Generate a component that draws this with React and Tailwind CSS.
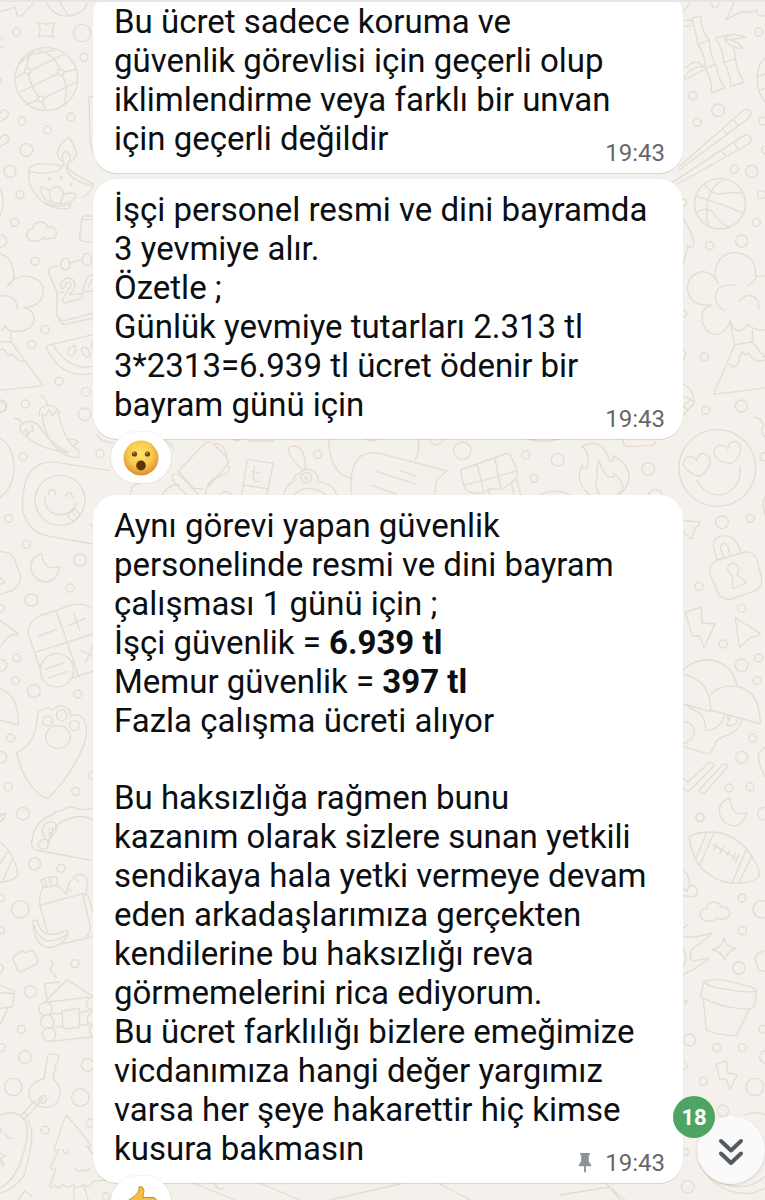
import React, { useState } from 'react';

const dots = {
  leftTop: [[50, 96, 12], [246, 99, 26], [252, 172, 12], [66, 363, 12], [213, 351, 12], [142, 390, 12], [79, 450, 19], [30, 514, 18], [60, 584, 12], [44, 667, 12], [2, 723, 18], [106, 784, 12], [135, 989, 12], [95, 1034, 12], [177, 1144, 12], [258, 1175, 13], [76, 1212, 12], [2, 1218, 18], [254, 1243, 19]],
  leftMid: [[69, 170, 12], [300, 161, 12], [26, 355, 12], [79, 433, 12], [240, 480, 19], [210, 564, 12], [94, 600, 19], [0, 625, 12], [50, 774, 12], [2, 796, 18], [46, 842, 12], [102, 873, 19], [233, 882, 12], [32, 1014, 12], [2, 1072, 18], [25, 1160, 12], [227, 1174, 12], [277, 1126, 12]],
  leftBottom: [[69, 41, 19], [104, 191, 18], [183, 205, 12], [61, 328, 26], [2, 294, 11], [2, 391, 11], [225, 491, 12], [91, 575, 18], [64, 688, 12], [4, 743, 12], [75, 771, 19], [263, 795, 19], [40, 861, 26], [241, 893, 26], [135, 990, 12], [270, 969, 12], [318, 1190, 11]],
  rightTop: [[281, 96, 12], [83, 287, 12], [159, 331, 19], [97, 367, 12], [294, 363, 12], [208, 507, 12], [260, 514, 18], [302, 450, 12], [290, 584, 12], [274, 667, 12], [230, 723, 18], [134, 737, 12], [54, 608, 11], [54, 941, 11], [118, 1071, 12], [229, 1218, 18], [122, 1231, 12]],
  rightMid: [[171, 367, 19], [256, 355, 12], [102, 559, 12], [230, 625, 12], [175, 732, 12], [281, 774, 12], [230, 796, 19], [276, 842, 12], [263, 1014, 12], [230, 1072, 18], [192, 1164, 12], [255, 1160, 12], [105, 1252, 12], [297, 170, 12]],
  rightBottom: [[105, 53, 12], [297, 41, 19], [231, 294, 12], [290, 328, 26], [232, 392, 12], [222, 504, 18], [74, 720, 18], [155, 743, 12], [232, 743, 12], [294, 688, 12], [54, 797, 12], [115, 844, 12], [270, 861, 26], [302, 771, 18], [174, 932, 17], [60, 1056, 11], [68, 1160, 19]],
};

const Dots = ({ list }) => list.map(([x, y, r]) => <circle key={`${x}-${y}`} cx={x} cy={y} r={r} />);

const Wallpaper = () => (
  <svg
    aria-hidden="true"
    className="absolute inset-0 h-full w-full"
    viewBox="0 2 765 1198"
    preserveAspectRatio="xMidYMin slice"
    fill="none"
    stroke="#e5dcd0"
    strokeWidth="4"
    strokeLinecap="round"
    strokeLinejoin="round"
  >
    {/* left column, top */}
    <g transform="scale(.33333)">
      <Dots list={dots.leftTop} />
      <path d="M0 35L45 22L52 48L66 47L98 10M140 10Q165 52 206 48Q250 43 262 10M175 0L206 48" />
      <path d="M113 66Q137 78 164 67Q152 89 162 112Q136 102 114 112Q127 90 113 66Z" />
      <path d="M0 112L8 118M0 138L10 142M0 235L6 243L0 249M0 341L8 331Q20 326 24 337Q28 347 19 353L0 366M0 415L9 405Q22 402 25 413Q28 423 19 429L0 440M0 565Q20 605 0 645" />
      <circle cx="139" cy="237" r="94" />
      <circle cx="83" cy="213" r="9" />
      <circle cx="182" cy="217" r="9" />
      <circle cx="122" cy="297" r="9" />
      <path d="M92 211L190 163M51 232L74 217M62 276L173 221M191 216L231 208M76 316L113 299M131 295L230 246M81 204Q80 170 105 149M85 222Q95 270 117 289M126 306L138 330M112 149Q160 160 180 208M186 226Q210 265 190 316M60 190L92 163L170 149" />
      <path d="M208 412Q175 432 172 459Q175 480 191 485M208 412Q222 437 230 457Q226 480 209 486M190 484Q180 463 198 454Q218 465 207 485M87 512Q84 495 125 491Q165 492 187 498Q194 494 191 485M207 485Q197 500 209 509Q232 528 280 552Q278 573 245 594M87 512Q82 550 103 577Q115 595 135 610Q165 630 206 625Q213 620 212 612M87 512Q115 527 160 515Q185 510 187 498M200 500Q202 540 280 558" />
      <path d="M122 560Q140 564 150 574Q155 563 175 560Q190 570 190 583Q207 578 228 581Q225 603 204 609Q170 614 147 604Q122 595 122 560ZM150 574Q147 590 156 605M190 583Q190 596 180 610M128 604Q160 625 212 613" />
      <circle cx="148" cy="537" r="3" /><circle cx="183" cy="533" r="3" /><circle cx="214" cy="553" r="3" />
      <path d="M100 723Q80 722 80 703Q84 684 99 689Q96 669 120 666Q143 667 143 683Q162 676 170 697Q169 717 148 715Q137 720 133 712Q123 725 100 723Z" />
      <path d="M278 648H253Q245 651 244 665L239 714Q241 723 252 724L278 727M246 658H278" />
      <path d="M0 762Q43 772 41 835Q38 845 22 858Q45 825 82 829Q130 836 130 875Q126 920 72 923Q105 930 102 962Q91 999 38 993Q20 993 18 977Q10 990 0 992M0 888Q50 880 52 928M33 993L34 1026L0 1025M34 1026L130 1157L0 1171M0 1052Q10 1040 18 1058Q28 1074 35 1060Q50 1084 73 1085" />
      <path d="M172 880L145 816Q145 806 155 802L176 797M210 789L244 778M172 882L169 946Q182 962 194 962L278 940M180 960Q183 974 196 973L278 954" />
      <ellipse cx="196" cy="792" rx="13" ry="18" /><ellipse cx="261" cy="778" rx="14" ry="18" />
      <path d="M172 880L190 876M183 861Q180 840 203 834Q232 838 222 867L209 884L247 880Q252 890 243 895L194 909Q184 905 190 894L213 857Q214 846 203 848Q196 850 195 861Q187 870 183 861M278 825L264 828L248 869Q250 880 265 875L278 873M278 838L265 860" />
      <path d="M278 1004L145 1036Q138 1038 139 1044Q175 1120 245 1124L278 1120M160 1035Q190 1090 245 1102L278 1099M205 1052Q212 1036 225 1038Q230 1052 219 1067Q201 1070 205 1052M245 1043Q262 1037 269 1057Q273 1071 261 1073Q243 1063 245 1043M278 1025Q271 1040 278 1045M278 290H267L270 420L278 460" />
    </g>

    {/* left column, middle */}
    <g transform="translate(0 400) scale(.33333)">
      <Dots list={dots.leftMid} />
      <path d="M0 5Q15 5 17 17Q17 34 0 36M118 -14Q140 -8 143 16M119 47Q112 20 145 17Q172 17 175 36Q177 60 190 90Q203 130 236 152V171Q205 180 160 135Q128 90 126 40L137 48L147 30L157 48L168 33L181 38M43 56Q60 53 66 71M66 99Q50 78 74 67Q100 58 118 80Q150 130 205 158Q120 150 66 99ZM68 96L80 88L82 107L92 93L100 96L96 75M202 118Q230 115 235 128L220 138" />
      <path d="M0 115Q42 140 42 204Q40 265 0 292M330 212L170 187Q95 180 75 250Q65 300 68 330Q85 400 150 409L278 432" />
      <circle cx="180" cy="301" r="75" />
      <path d="M146 284Q146 268 157 268Q167 270 167 283M197 292Q197 278 208 278Q219 281 217 294M134 291Q135 340 178 345Q218 342 228 309M201 345Q210 340 224 325L237 340Q240 356 222 362Q207 360 201 345M217 333L226 348" />
      <path d="M126 461Q90 470 92 508Q105 547 140 546Q175 540 178 500Q162 506 145 500Q125 485 126 461ZM0 455Q40 455 46 485L61 525Q65 550 40 570L0 584M0 533L16 548L0 553M0 661L55 702Q35 704 22 713L0 740" />
      <path d="M278 625Q250 608 218 614L118 648Q85 665 84 700L120 805M170 635L237 831M106 757L278 702M218 834L278 814M115 709L170 688M204 677L257 655M222 641L239 691M240 750L278 768M278 740L257 788" />
      <circle cx="171" cy="811" r="50" /><path d="M136 807L193 788M146 833L203 814" />
      <path d="M0 865Q60 890 54 975L0 960" />
      <path d="M115 937Q140 918 157 930Q182 905 208 930Q212 938 211 948Q235 937 252 960Q265 985 255 1025Q220 1120 145 1195Q130 1198 105 1170Q65 1130 50 1058Q95 1035 105 995Q110 970 115 937Z" />
      <ellipse cx="174" cy="1011" rx="37" ry="34" /><circle cx="143" cy="963" r="15" /><circle cx="185" cy="946" r="16" /><circle cx="223" cy="976" r="15" />
      <path d="M0 1242L16 1240Q13 1255 0 1266M278 378L268 374" />
    </g>

    {/* left column, bottom */}
    <g transform="translate(0 800) scale(.33333)">
      <Dots list={dots.leftBottom} />
      <path d="M278 182L108 150Q93 142 95 125Q103 60 158 45L169 33Q178 36 189 30Q200 18 222 22Q240 34 278 25M145 138Q150 65 225 51Q250 46 278 58M113 135Q120 117 138 117Q150 125 140 146Q120 150 113 135M138 115Q120 100 132 75Q145 60 164 69Q178 85 160 102L145 120M147 83L148 91M158 80L156 88M145 103L153 98" />
      <path d="M0 125Q45 160 53 221Q50 242 0 247M0 190L24 154M8 243L37 178M0 50L16 39Q15 58 0 65" />
      <path d="M123 240Q145 228 168 230Q174 240 171 255M123 240L130 261Q147 265 171 254M135 238L140 258M148 234L153 255M130 263Q118 274 119 314L142 395M168 259Q185 260 195 279M121 315L248 281L264 287L278 335M195 279Q205 285 200 275Q205 238 235 223Q262 222 263 250L258 282M226 236L234 244M203 264L213 271M248 285L270 375Q272 400 258 410M278 410L185 432" />
      <path d="M99 360L111 362Q120 395 142 402Q170 406 197 391Q209 393 203 403Q182 445 140 442Q100 430 99 360ZM102 374Q110 410 140 422Q175 425 201 402" />
      <path d="M40 478Q38 468 50 463L67 452L74 458L95 451Q103 452 105 463L114 482Q113 490 105 494L65 515Q54 517 50 505ZM0 492Q20 500 0 522M0 555L44 573L36 621L0 625M0 577L43 582M23 624L0 675M150 480Q166 490 153 503Q147 517 161 518L168 533" />
      <path d="M142 605L134 551L178 546M132 609L200 539L278 588M142 606L265 592M185 633L238 625L239 682L190 687ZM152 643L184 640M160 682L188 679M240 637L265 633M240 676L265 672M145 725L278 711M278 590Q252 600 262 624Q278 632 278 632M278 632Q252 655 268 672M278 672Q258 690 278 711" />
      <circle cx="136" cy="627" r="20" /><circle cx="142" cy="665" r="20" /><circle cx="147" cy="704" r="20" />
      <path d="M132 836L143 766Q158 755 176 767L172 789L162 798L169 810L159 822L162 841Q187 858 178 893Q170 920 137 923Q100 917 88 891Q80 850 132 836Z" />
      <circle cx="129" cy="898" r="11" /><circle cx="72" cy="947" r="8" />
      <path d="M130 895L93 937L79 951M125 893L97 910L67 942M0 945Q50 925 78 965Q88 1010 68 1065Q50 1135 0 1165M83 960Q98 985 95 1020Q85 1090 70 1130Q45 1165 0 1180M14 1000Q20 1015 33 1014M0 1060L16 1068L0 1075L14 1095M0 1084L10 1100M0 985L5 998M55 1200L75 1172L96 1190" />
      <path d="M201 946Q190 955 178 1005L163 1045Q162 1054 176 1050L152 1101Q151 1110 168 1108L149 1155Q150 1170 163 1155Q175 1172 190 1154Q205 1170 218 1154Q235 1172 250 1154Q270 1168 278 1145L330 1138M201 946L270 1031Q275 1045 260 1038L278 1062M187 1048Q198 1072 207 1050M224 1105Q235 1120 250 1109Q258 1120 270 1105M222 1163V1200M252 1160L265 1200M278 1075L300 1130" />
    </g>

    {/* right column, top */}
    <g transform="translate(665 0) scale(.33333)">
      <Dots list={dots.rightTop} />
      <path d="M55 35L90 -10M140 12Q145 28 156 22L165 8M207 8L183 60Q235 25 261 38L275 30L280 47L300 48" />
      <path d="M55 62L80 60M55 80L80 76M80 55L107 48Q108 95 133 121L99 133Q92 95 80 55ZM99 133L133 121Q135 165 152 193L121 205Q122 170 99 133ZM121 205L152 193Q160 235 180 264L140 278Q142 240 121 205ZM60 205Q95 170 115 200Q80 197 58 232M58 240L120 207M152 113L200 103M152 113Q175 150 176 188L212 176Q214 210 238 246L197 259Q197 220 176 188M212 176Q210 155 203 138M180 114Q205 95 242 112L180 121Q200 145 234 145Q220 120 180 117" />
      <path d="M42 500L232 334Q250 320 257 337Q260 347 247 358L42 510M172 386L187 403M206 358L220 377M22 548L232 409Q250 397 258 415Q260 427 246 435L38 552M170 451L183 470M207 428L219 446M300 175Q277 190 277 237Q277 280 300 305M280 230L300 221M285 270L300 264" />
      <circle cx="165" cy="611" r="76" />
      <path d="M95 589Q150 605 237 640M117 552Q135 580 161 582Q210 575 233 580M180 537Q110 570 129 678M92 638Q130 615 150 645Q165 670 192 681M55 655Q78 690 88 730Q82 750 69 738Q64 760 55 790" />
      <path d="M160 852Q145 825 152 805Q165 757 212 758Q275 765 271 824Q270 832 300 828M160 852Q145 815 110 815Q67 824 67 868Q75 920 138 915M138 917Q105 925 112 965Q120 1000 153 1004Q185 1000 195 962Q205 995 225 992Q242 987 250 972Q263 992 300 990M211 857Q155 845 151 891Q154 918 176 931M250 858Q268 842 275 833M223 905Q240 880 265 889Q285 900 281 928" />
      <path d="M195 962L209 1034L146 1183L300 1164M262 990V1026L209 1034M262 1026L300 1072M192 1090Q200 1108 216 1096L231 1055L242 1065L251 1058Q265 1090 300 1080M55 1152Q88 1170 88 1210L55 1245M55 1220L70 1230M55 1050Q70 1062 55 1078" />
    </g>

    {/* right column, middle */}
    <g transform="translate(665 400) scale(.33333)">
      <Dots list={dots.rightMid} />
      <circle cx="157" cy="204" r="115" />
      <path d="M106 229Q66 220 55 194Q54 172 76 170Q92 172 95 184Q95 164 114 160Q136 164 136 188Q128 212 106 229ZM200 191Q157 188 147 162Q144 140 165 136Q184 136 189 148Q190 126 210 124Q230 130 227 154Q220 176 200 191ZM96 240Q120 290 170 284Q230 270 225 198M268 52Q290 52 292 72M300 75Q280 90 300 110M300 290Q290 310 300 345M55 17L75 0M60 -10L88 5" />
      <path d="M55 362L105 366Q106 374 91 383L80 416Q73 418 55 393M155 479L145 437Q145 407 180 407Q210 408 228 456M176 473L166 444Q168 430 181 431Q190 435 195 466M157 480L245 455Q268 458 276 480L290 535Q292 558 272 572L202 597Q170 600 158 578L134 520Q131 493 157 480ZM198 524Q182 510 191 495Q205 483 219 498Q226 514 215 523L245 548L203 567L202 525" />
      <path d="M61 638L109 621L111 669L150 672L117 743L104 708L82 709ZM211 654L286 700Q287 707 257 712L224 742Q221 737 211 654Z" />
      <path d="M55 810Q90 775 140 780Q205 795 216 858M55 823Q140 840 137 935L55 912M137 883Q165 850 225 861Q285 880 286 972L138 930M68 920L100 937Q117 940 123 990Q160 995 180 945M188 947Q184 965 198 950M192 975Q182 980 186 973L195 952M192 977Q215 980 217 957M230 960Q225 990 190 1005Q150 1015 151 1035L138 1057Q133 1063 125 1060L55 1040M55 965Q90 970 88 1000Q80 1025 55 1030" />
      <path d="M55 1135L68 1147L130 1090Q145 1083 148 1097L75 1170Q64 1177 55 1165M103 1170L173 1093Q187 1088 188 1101L119 1179Q106 1184 103 1170ZM300 1042L280 1060Q280 1095 300 1130" />
    </g>

    {/* right column, bottom */}
    <g transform="translate(665 800) scale(.33333)">
      <Dots list={dots.rightBottom} />
      <path d="M196 -6Q160 5 163 38Q175 78 210 78Q240 70 245 38Q225 45 211 36Q194 20 196 -6Z" />
      <path d="M73 115Q70 97 150 96Q200 100 246 148Q290 210 282 228Q270 248 210 250Q150 247 105 200Q80 165 73 115ZM125 98L93 174M147 98L106 192M243 150L203 245M260 170L223 244M142 133L218 177M156 130L146 151M175 140L164 160M194 150L184 170M211 159L202 181M221 167L210 187" />
      <path d="M55 210Q80 235 72 258Q92 252 98 272Q95 292 80 290L55 287M55 266L65 275L72 258" />
      <path d="M123 362Q105 360 105 341Q108 325 125 328Q123 308 147 306Q168 310 168 322Q190 317 195 340Q190 360 172 357Q160 361 157 353Q145 366 123 362ZM55 385L67 375M55 410Q90 415 140 399Q135 410 80 448Q70 475 84 483L130 475Q120 490 55 524M55 445Q70 475 55 500M177 413Q183 442 211 445Q185 455 179 481Q170 455 143 450Q174 440 177 413ZM300 452L278 460L270 475L280 510L300 515" />
      <path d="M117 544Q155 530 240 556Q270 562 274 573L269 618Q262 630 230 626Q160 620 110 592Q105 588 108 583ZM117 544Q125 562 190 569Q250 580 274 573M115 597L124 690Q150 705 214 707L252 630M55 605L68 600L60 615" />
      <path d="M153 793L184 781L189 819L217 823L195 868L183 838L164 836ZM240 945Q275 930 300 945M103 1090Q130 1150 215 1160Q265 1162 300 1130M130 1130Q180 1185 260 1180L300 1165" />
    </g>

    {/* strip under the second message */}
    <g transform="translate(90 425) scale(.33333)">
      <path d="M20 30Q40 55 70 52M120 210Q125 175 150 175M205 45Q245 45 250 75M215 210Q240 175 268 180M265 138L345 55Q358 45 372 58L412 100Q418 112 408 125L350 190M265 138L310 190L340 192M375 55Q405 55 410 95M412 120Q425 130 410 145L372 160Q350 175 345 210M248 150Q260 140 275 155L325 210M248 150Q245 165 255 175L290 210M390 210Q405 190 425 210M430 42Q440 52 452 42M475 48H550" />
      <path d="M472 103L550 115L530 210M472 103L455 210M460 180L537 192M493 125L490 160Q495 175 508 168M485 140L508 144M640 137Q590 90 597 72Q605 55 628 68Q650 90 645 132M580 210Q590 175 612 170Q608 150 630 145Q645 125 668 138Q690 150 682 170Q730 175 740 210M612 210Q650 170 710 210" />
      <circle cx="649" cy="158" r="16" /><circle cx="649" cy="158" r="4" /><circle cx="683" cy="88" r="12" />
      <path d="M715 42Q720 150 785 160M985 42Q990 80 975 105M785 210Q775 130 810 95Q835 78 870 85L1070 138L1040 165L1034 210M860 140L975 176M847 182L920 208M830 42Q845 55 860 42M930 137L976 153" />
      <circle cx="1039" cy="40" r="20" />
    </g>
    <g transform="translate(400 425) scale(.33333)">
      <circle cx="187" cy="77" r="26" /><circle cx="377" cy="90" r="12" /><circle cx="402" cy="160" r="12" /><circle cx="473" cy="104" r="19" /><circle cx="745" cy="132" r="19" /><circle cx="766" cy="215" r="22" />
      <path d="M182 135L315 87Q330 83 335 98L353 140Q350 170 325 178Q303 200 270 190Q245 215 205 200Q188 190 182 135ZM232 118L250 195M285 100L302 188M190 182L350 138M268 210V198M335 178L342 210M350 165L362 210M385 42Q430 55 475 42M420 208Q460 190 510 208M668 42L672 60Q680 66 690 64L755 62L768 50" />
      <path d="M545 65Q580 45 605 65Q620 80 630 108Q645 110 640 92Q690 120 687 160Q680 200 650 210M545 65Q575 85 560 130Q550 135 545 122Q530 155 545 180Q555 200 570 210M600 210Q580 190 592 150Q588 125 598 108Q605 140 625 155Q650 160 640 145Q675 170 668 195L650 210" />
    </g>
    <path strokeWidth="1.3" d="M193 1183L235 1200M260 1183L300 1200M215 1183Q217 1192 224 1188M560 1195L610 1187L620 1200M605 1183L625 1200M330 1200L400 1184M440 1184L470 1200" />
  </svg>
);

const Surprised = () => (
  <svg viewBox="0 0 36 36" className="h-9 w-9" aria-hidden="true">
    <defs>
      <radialGradient id="face" cx="48%" cy="38%" r="62%">
        <stop offset="0" stopColor="#ffe56e" />
        <stop offset=".55" stopColor="#f9cb4a" />
        <stop offset="1" stopColor="#d98d35" />
      </radialGradient>
    </defs>
    <circle cx="18" cy="18" r="17.5" fill="url(#face)" />
    <ellipse cx="11.5" cy="14" rx="2.6" ry="2.6" fill="#6b4412" />
    <ellipse cx="24.5" cy="14" rx="2.6" ry="2.6" fill="#6b4412" />
    <circle cx="11" cy="13.200" r=".9" fill="#c99f55" />
    <circle cx="24" cy="13.200" r=".9" fill="#c99f55" />
    <ellipse cx="18" cy="25.500" rx="4.800" ry="5" fill="#5d3608" />
  </svg>
);

const ThumbsUp = () => (
  <svg viewBox="0 0 36 36" className="h-9 w-9" aria-hidden="true">
    <path
      d="M16 3c2.500-1.200 4.700.6 4.900 3.600.1 2.600-1.200 4.900-.9 6.900h9.900c3 0 4 2.500 2.500 4.500 2 1.500 1.500 4-.5 5 1.200 2 .3 4-1.700 4.700.7 2.300-.8 4.300-3.300 4.300H15c-5.500 0-9-3.500-10.500-7.500L2 19l6-4.500C12.500 11.500 16.500 8.500 16 3z"
      fill="#f5bf42"
      stroke="#c98a2c"
      strokeWidth="1"
    />
  </svg>
);

const Pin = () => (
  <svg viewBox="0 0 14 21" className="h-5 w-4" fill="#8b9398" aria-hidden="true">
    <path d="M2 0h10v2h-1v7l2.500 3.500V14H8v5.500L7 21l-1-1.500V14H.5v-1.500L3 9V2H2z" />
  </svg>
);

const messages = [
  {
    id: 1,
    time: '19:43',
    paragraphs: [['Bu ücret sadece koruma ve', 'güvenlik görevlisi için geçerli olup', 'iklimlendirme veya farklı bir unvan']],
    lastLine: 'için geçerli değildir',
  },
  {
    id: 2,
    time: '19:43',
    paragraphs: [[
      'İşçi personel resmi ve dini bayramda',
      '3 yevmiye alır.',
      'Özetle ;',
      'Günlük yevmiye tutarları 2.313 tl',
      '3*2313=6.939 tl ücret ödenir bir',
    ]],
    lastLine: 'bayram günü için',
    reaction: { label: 'Şaşkın', icon: <Surprised /> },
  },
  {
    id: 3,
    time: '19:43',
    pinned: true,
    paragraphs: [
      [
        'Aynı görevi yapan güvenlik',
        'personelinde resmi ve dini bayram',
        'çalışması 1 günü için ;',
        <>İşçi güvenlik = <strong className="font-bold">6.939 tl</strong></>,
        <>Memur güvenlik = <strong className="font-bold">397 tl</strong></>,
        'Fazla çalışma ücreti alıyor',
      ],
      [
        'Bu haksızlığa rağmen bunu',
        'kazanım olarak sizlere sunan yetkili',
        'sendikaya hala yetki vermeye devam',
        'eden arkadaşlarımıza gerçekten',
        'kendilerine bu haksızlığı reva',
        'görmemelerini rica ediyorum.',
        'Bu ücret farklılığı bizlere emeğimize',
        'vicdanımıza hangi değer yargımız',
        'varsa her şeye hakarettir hiç kimse',
      ],
    ],
    lastLine: 'kusura bakmasın',
    reaction: { label: 'Beğendim', icon: <ThumbsUp /> },
  },
];

const Message = ({ message }) => (
  <li className="flex flex-col">
    <div className="rounded-3xl bg-white pt-[11px] pr-[18px] pb-1 pl-[21px] text-[33px] leading-[39px] text-[#0b0f12] shadow-[0_1px_1px_rgba(0,0,0,0.12)]">
      <div className="flex flex-col gap-[38px]">
        {message.paragraphs.map((lines, i) => (
          <p key={i}>
            {lines.map((line, j) => (
              <span key={j} className="block">{line}</span>
            ))}
          </p>
        ))}
      </div>
      {/* the time sits a little below the last line */}
      <div className="flex h-[50px] justify-between">
        <p>{message.lastLine}</p>
        <div className="flex items-center gap-3 self-end text-2xl text-[#63686c]">
          {message.pinned && <Pin />}
          <time>{message.time}</time>
        </div>
      </div>
    </div>
    {message.reaction && (
      <button
        aria-label={message.reaction.label}
        className="-mt-[7px] mb-[6px] ml-[18px] flex h-[51px] w-[60px] items-center justify-center rounded-full bg-white shadow-[0_0_1px_1px_rgba(0,0,0,0.05)]"
      >
        {message.reaction.icon}
      </button>
    )}
  </li>
);

const App = () => {
  const [unread, setUnread] = useState(18);

  return (
    <main className="relative h-screen overflow-hidden border-t-2 border-[#e4e5e5] bg-[#f4f0eb] font-['Roboto',sans-serif]">
      <Wallpaper />
      <ul className="relative -mt-[11px] mr-[82px] ml-[93px] flex flex-col gap-[6px]">
        {messages.map((m) => (
          <Message key={m.id} message={m} />
        ))}
      </ul>

      <div className="absolute right-0 bottom-4">
        <button
          aria-label="En alta git"
          onClick={() => setUnread(0)}
          className="flex h-[68px] w-[68px] items-center justify-center rounded-full bg-[#fafafa] pt-1 shadow-[0_1px_3px_rgba(0,0,0,0.15)]"
        >
          <svg viewBox="0 0 26 28" className="h-7 w-[26px]" fill="none" stroke="#545b60" strokeWidth="4" strokeLinecap="round" strokeLinejoin="round" aria-hidden="true">
            <path d="M3 3l10 9.500L23 3M3 15.500l10 9.500 10-9.500" />
          </svg>
        </button>
        {unread > 0 && (
          <span className="absolute -top-5 -left-6 flex h-[42px] w-[42px] items-center justify-center rounded-full bg-[#4ea563] text-[22px] font-bold text-white">
            {unread}
          </span>
        )}
      </div>
    </main>
  );
};

export default App;
